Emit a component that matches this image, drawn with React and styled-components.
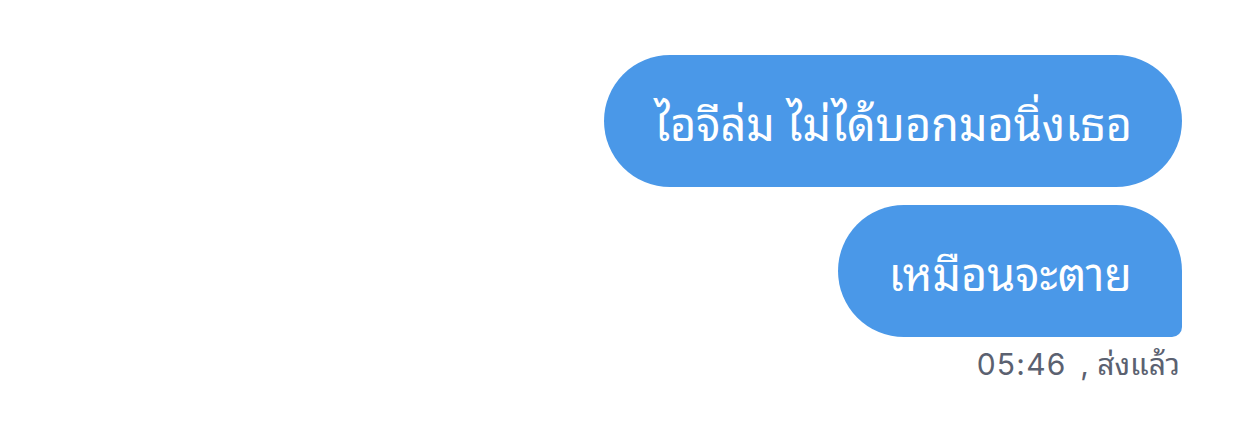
import React from "react";
import styled, { createGlobalStyle } from "styled-components";

const Global = createGlobalStyle`
  html, body { margin: 0; padding: 0; background: #ffffff; }
  body { font-family: "Noto Sans", sans-serif; }
`;

const thaiStack = `"Noto Sans Thai Looped", "Loma", "Garuda", "Waree", "Tlwg Typo", "Sarabun", "Noto Sans Thai", "Noto Sans", sans-serif`;

const Thread = styled.div`
  display: flex;
  flex-direction: column;
  align-items: flex-end;
  gap: 18px;
  padding: 55px 60px 0 0;
`;

const Bubble = styled.div`
  box-sizing: border-box;
  height: 132px;
  display: flex;
  align-items: center;
  padding: 0 50px;
  background: #4a98e8;
  color: #ffffff;
  font-family: ${thaiStack};
  font-size: 45px;
  line-height: 1;
  border-radius: ${(p) => (p.$tail ? "66px 66px 10px 66px" : "66px")};
  white-space: nowrap;
`;

const Meta = styled.div`
  margin-top: -10px;
  padding-right: 2px;
  color: #5b6170;
  font-family: Inter, ${thaiStack};
  font-size: 30px;
  line-height: 1.3;
  white-space: pre;
`;

const Time = styled.span`
  letter-spacing: 1.2px;
  margin-right: 4px;
`;

export default function App() {
  return (
    <>
      <Global />
      <Thread>
        <Bubble>ไอจีล่ม ไม่ได้บอกมอนิ่งเธอ</Bubble>
        <Bubble $tail>เหมือนจะตาย</Bubble>
        <Meta>
          <Time>05:46 </Time>, ส่งแล้ว
        </Meta>
      </Thread>
    </>
  );
}
